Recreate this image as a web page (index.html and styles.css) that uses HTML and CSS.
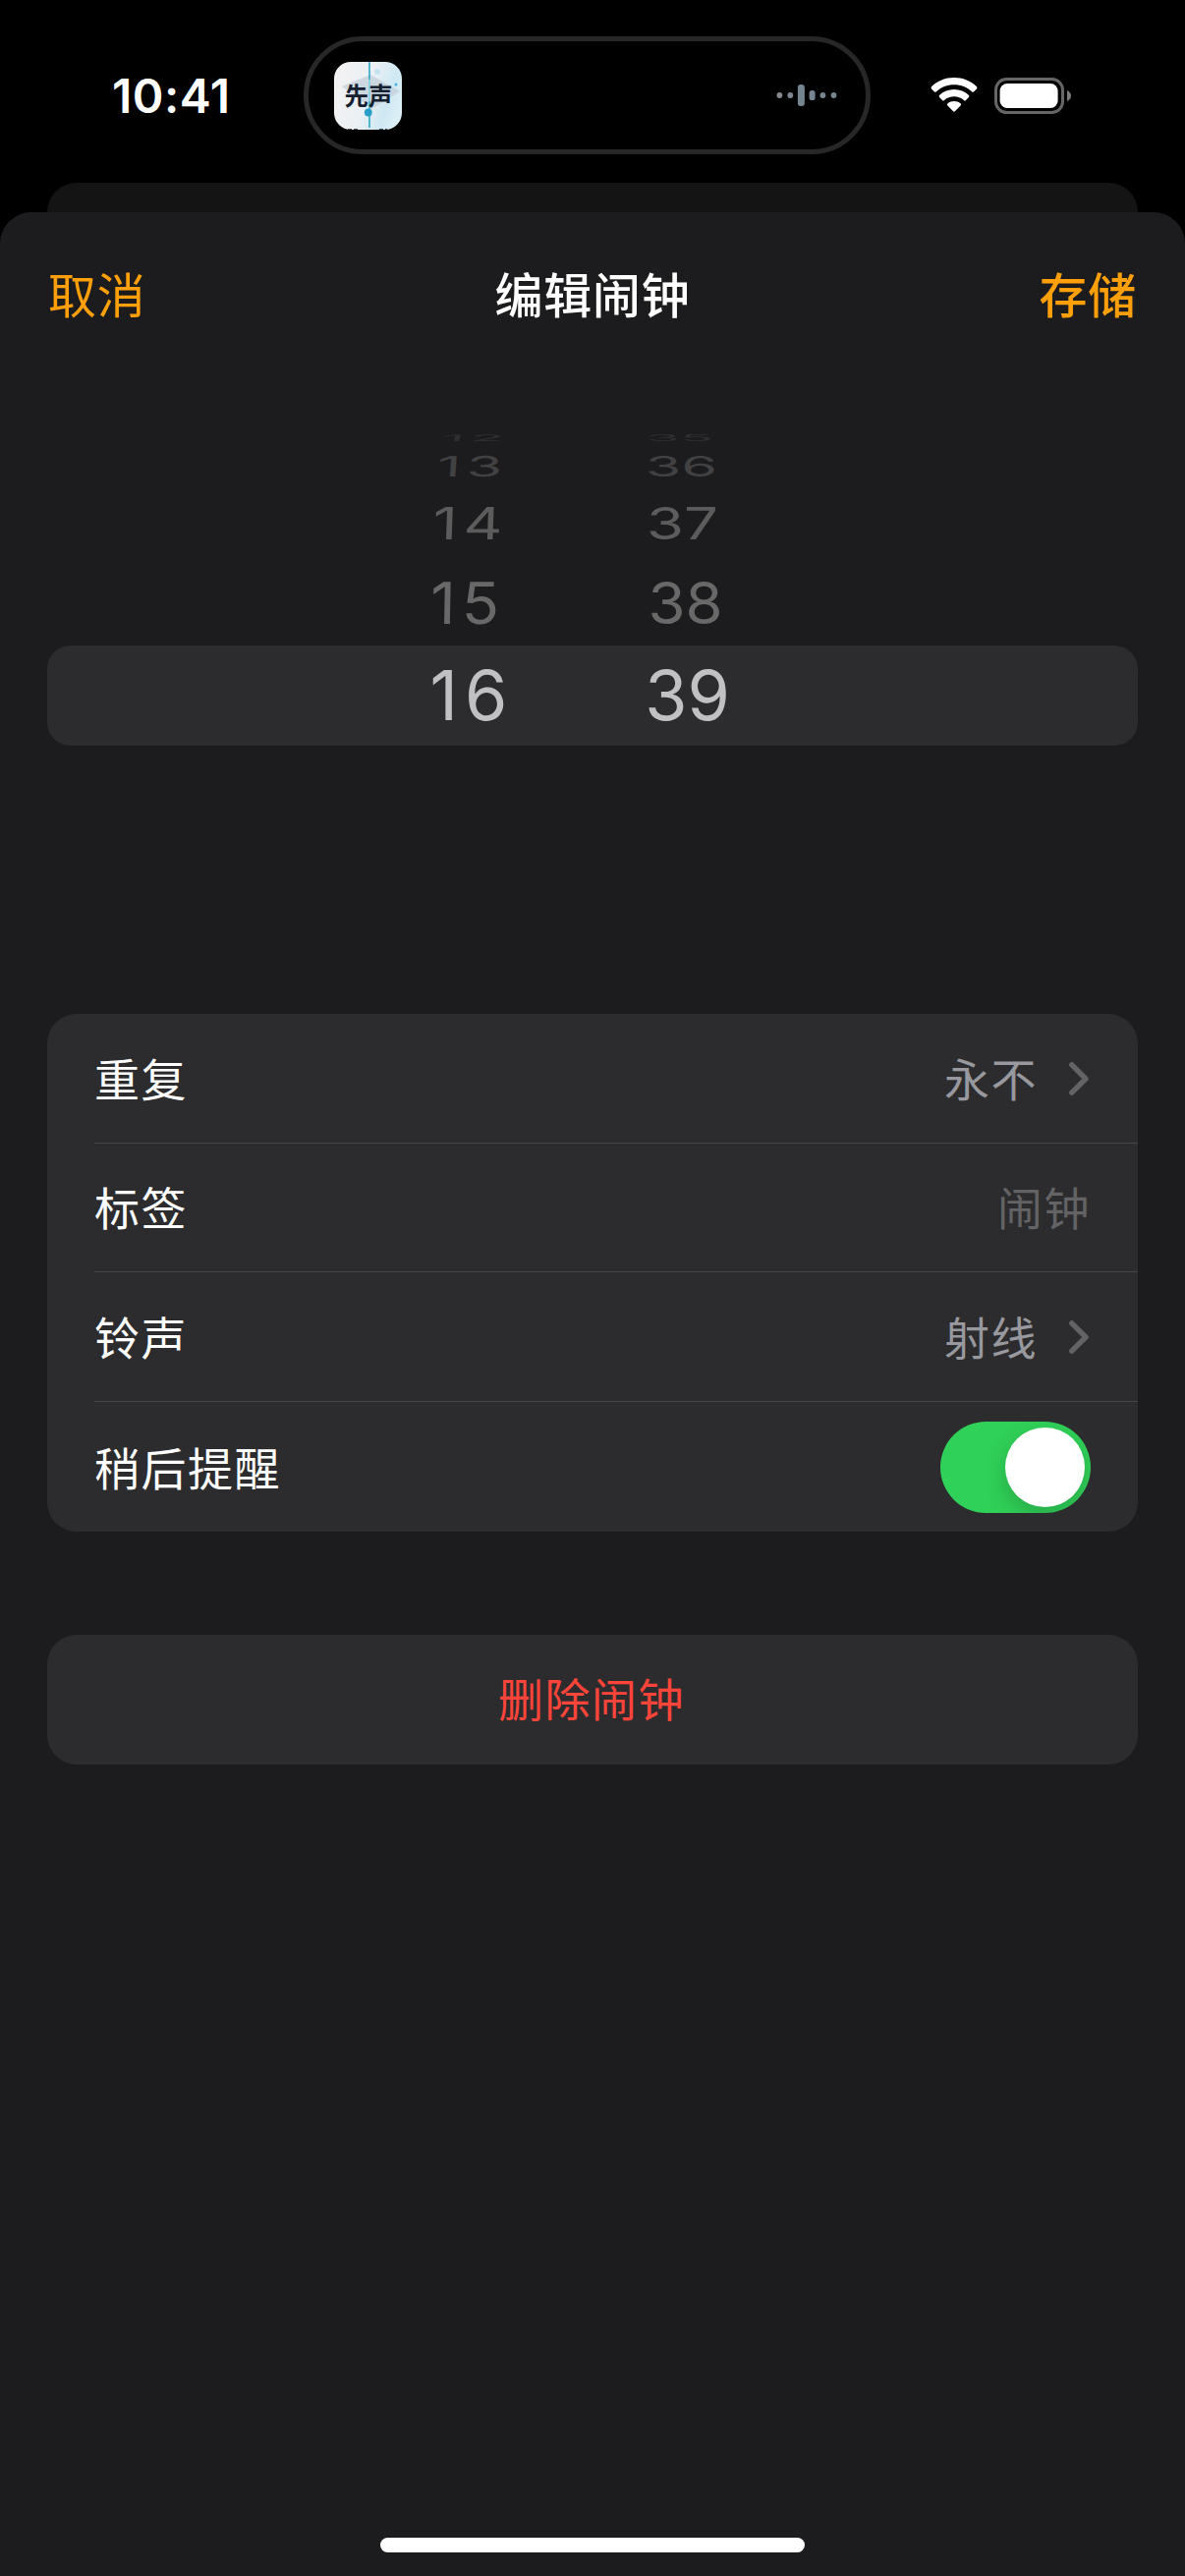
FILE: index.html
```html
<!DOCTYPE html>
<html lang="zh-CN">
<head>
<meta charset="utf-8">
<title>编辑闹钟</title>
<link rel="stylesheet" href="styles.css">
</head>
<body>
<div class="phone">
  <header class="status">
    <div class="time">10:41</div>
    <div class="island">
      <svg class="app-icon" width="69" height="69" viewBox="0 0 69 69">
        <defs>
          <linearGradient id="paper" x1="0" y1="0.3" x2="1" y2="0.6">
            <stop offset="0" stop-color="#f3f2f3"/>
            <stop offset="0.5" stop-color="#eaf0f4"/>
            <stop offset="0.8" stop-color="#cfe8f3"/>
            <stop offset="1" stop-color="#dceff7"/>
          </linearGradient>
        </defs>
        <rect width="69" height="69" rx="17" fill="url(#paper)"/>
        <path d="M8 25L37 13L67 30L38 48Z" fill="#c3cfd9" opacity="0.75"/>
        <circle cx="44" cy="10" r="3" fill="#c5e3ef"/>
        <circle cx="63" cy="23" r="1.5" fill="#3fb4dc"/>
        <path d="M36 0V67" stroke="#43b0cd" stroke-width="1.8"/>
        <text class="app-name" x="10.500" y="43.500">先声</text>
        <path d="M36 18V40" stroke="#b9e6f2" stroke-width="1.200"/>
        <circle cx="34.800" cy="51.500" r="3.900" fill="#279fc9"/>
        <path d="M14 68.500H25M46 68.500H54" stroke="#3c4650" stroke-width="1" stroke-dasharray="4 2"/>
      </svg>
      <svg class="wave" width="62" height="24" viewBox="0 0 62 24" fill="#748590">
        <circle cx="3.400" cy="12" r="2.900" fill="#85898f"/>
        <circle cx="14.300" cy="12" r="2.900" fill="#7f8890"/>
        <rect x="21.900" y="1" width="7" height="22" rx="3"/>
        <rect x="33.600" y="7" width="6" height="10" rx="2.600"/>
        <circle cx="47.400" cy="12" r="2.900"/>
        <circle cx="58.500" cy="12" r="2.900"/>
      </svg>
    </div>
    <div class="indicators">
      <svg width="48" height="36" viewBox="0 0 48 36" fill="#fff">
        <path d="M24 0C33 0 41 3.300 47 9.200Q48 10.300 47 11.400L44.200 14.200Q43.200 15.200 42.100 14.200C37.200 9.600 31 7.200 24 7.200S10.800 9.600 5.900 14.200Q4.800 15.200 3.800 14.200L1 11.400Q0 10.300 1 9.200C7 3.300 15 0 24 0Z"/>
        <path d="M24 12C29.700 12 34.900 14.100 38.800 17.800Q40 18.900 38.900 20L36 22.900Q35 23.900 33.900 22.900C31.200 20.500 27.800 19.200 24 19.200S16.800 20.500 14.100 22.900Q13 23.900 12 22.900L9.100 20Q8 18.900 9.200 17.800C13.100 14.100 18.300 12 24 12Z"/>
        <path d="M24 24C26.500 24 28.700 24.900 30.500 26.300Q31.700 27.300 30.600 28.400L24.900 34.200Q24 35.100 23.100 34.200L17.400 28.400Q16.300 27.300 17.500 26.300C19.300 24.900 21.500 24 24 24Z"/>
      </svg>
      <svg width="79" height="37" viewBox="0 0 79 37">
        <rect x="1.500" y="1.500" width="68" height="34" rx="11" fill="none" stroke="#666" stroke-width="3"/>
        <rect x="5.600" y="6" width="59" height="25" rx="7.500" fill="#fff"/>
        <path d="M74 13Q78 15 78 18.500T74 24Z" fill="#7a7a7a"/>
      </svg>
    </div>
  </header>
  <div class="under-sheet"></div>
  <main class="sheet">
    <nav class="nav">
      <span class="cancel">取消</span>
      <h1 class="title">编辑闹钟</h1>
      <span class="save">存储</span>
    </nav>
    <section class="picker">
      <div class="slot slot-4"><span class="hour">12</span><span class="minute">35</span></div>
      <div class="slot slot-3"><span class="hour">13</span><span class="minute">36</span></div>
      <div class="slot slot-2"><span class="hour">14</span><span class="minute">37</span></div>
      <div class="slot slot-1"><span class="hour">15</span><span class="minute">38</span></div>
      <div class="slot selected"><span class="hour">16</span><span class="minute">39</span></div>
    </section>
    <section class="card options">
      <div class="row"><span class="label">重复</span><span class="value">永不</span>
        <svg class="chevron" width="20" height="34" viewBox="0 0 20 34"><path d="M2.800 2.800L17 17L2.800 31.200"/></svg></div>
      <div class="row row-label"><span class="label">标签</span><span class="value placeholder">闹钟</span></div>
      <div class="row"><span class="label">铃声</span><span class="value">射线</span>
        <svg class="chevron" width="20" height="34" viewBox="0 0 20 34"><path d="M2.800 2.800L17 17L2.800 31.200"/></svg></div>
      <div class="row"><span class="label">稍后提醒</span><span class="switch"><span class="knob"></span></span></div>
    </section>
    <section class="card delete">删除闹钟</section>
    <div class="home"></div>
  </main>
</div>
</body>
</html>
```
FILE: styles.css
```css
* { box-sizing: border-box; }
body {
  margin: 0;
  background: #000;
  font-family: "Noto Sans CJK SC", sans-serif;
  color: #fff;
}
.phone {
  width: 1206px;
  height: 2622px;
  overflow: hidden;
  display: flex;
  flex-direction: column;
}
.status {
  height: 186px;
  flex: none;
  display: flex;
  align-items: flex-start;
  padding: 37px 0 0;
}
.time {
  width: 309px;
  padding-left: 114px;
  margin-top: 1px;
  font: 600 48px/120px Inter, sans-serif;
  letter-spacing: 0.5px;
}
.island {
  width: 577px;
  height: 120px;
  border: 5px solid #272727;
  border-radius: 60px;
  display: flex;
  justify-content: space-between;
  align-items: center;
  padding: 0 29px 0 26px;
}
.app-name {
  font: 700 24.5px "Noto Sans CJK SC", sans-serif;
  fill: #14202f;
}
.indicators {
  display: flex;
  gap: 17px;
  margin: 42px 0 0 61px;
}
.under-sheet {
  flex: none;
  height: 60px;
  margin: 0 48px -30px;
  background: #141414;
  border-radius: 30px 30px 0 0;
}
.sheet {
  flex: 1;
  background: #1c1c1e;
  border-radius: 32px 32px 0 0;
  display: flex;
  flex-direction: column;
  padding: 0 48px 24px;
}
.nav {
  height: 222px;
  padding-top: 46px;
  display: grid;
  grid-template-columns: 1fr auto 1fr;
  font-size: 49px;
  line-height: 72px;
  letter-spacing: 0.8px;
}
.cancel { color: #ff9f0a; font-weight: 400; padding-left: 1px; }
.title { margin: 0; font-size: inherit; font-weight: 500; }
.save { color: #ff9f0a; font-weight: 500; text-align: right; padding-right: 1px; }
.picker {
  height: 594px;
  font: 400 70px/1 Inter, sans-serif;
}
.slot {
  display: flex;
  justify-content: center;
  align-items: center;
  padding-right: 28px;
}
.slot span {
  width: 221px;
  line-height: 0;
  text-align: center;
}
.slot .hour { letter-spacing: 7px; padding-left: 4px; }
.selected {
  height: 102px;
  border-radius: 24px;
  background: #2c2c2e;
  color: #c1c1c4;
}
.slot-1 { height: 87px; color: #686869; }
.slot-2 { height: 75px; color: #5c5c5d; }
.slot-3 { height: 41px; color: #414143; }
.slot-4 { height: 16px; color: #2e2e30; }
.slot-1 .hour { transform: translateX(-4px) skewX(-1deg) scale(0.9, 0.84); }
.slot-2 .hour { transform: translateX(-1px) skewX(-2deg) scale(0.88, 0.65); }
.slot-3 .hour { transform: translateX(1px) skewX(-4deg) scale(0.84, 0.41); }
.slot-4 .hour { transform: translateX(4px) skewX(-12deg) scale(0.8, 0.13); }
.slot-1 .minute { transform: translateX(-2px) scale(0.88, 0.84); }
.slot-2 .minute { transform: translateX(-5px) scale(0.88, 0.65); }
.slot-3 .minute { transform: translateX(-6px) scale(0.84, 0.41); }
.slot-4 .minute { transform: translateX(-8px) scale(0.8, 0.13); }
.card {
  background: #2c2c2e;
  border-radius: 30px;
  font-size: 46px;
  letter-spacing: 1.5px;
}
.options { height: 527px; padding-left: 48px; }
.row {
  height: 132px;
  display: flex;
  align-items: center;
  padding-right: 48px;
  border-bottom: 1px solid #454547;
}
.row-label { height: 131px; }
.row:last-child { border-bottom: 0; }
.label, .value { line-height: 68px; padding-bottom: 3px; }
.row-label .label, .row-label .value { padding-bottom: 5px; }
.label { flex: 1; }
.value { color: #98989f; margin-right: 32px; }
.placeholder { color: #636366; margin-right: 0; }
.chevron {
  margin-right: 2px;
  fill: none;
  stroke: #636366;
  stroke-width: 5.4;
  stroke-linecap: round;
  stroke-linejoin: round;
}
.switch {
  width: 153px;
  height: 93px;
  padding: 6px;
  display: flex;
  justify-content: flex-end;
  border-radius: 47px;
  background: #30d158;
  overflow: hidden;
}
.knob {
  width: 81px;
  height: 81px;
  border-radius: 50%;
  background: #fff;
  box-shadow: 0 9px 24px rgba(0, 0, 0, 0.2);
}
.delete {
  height: 132px;
  margin-top: 105px;
  padding-right: 2px;
  line-height: 126px;
  text-align: center;
  color: #ff453a;
}
.home {
  width: 432px;
  height: 15px;
  margin: auto auto 0;
  border-radius: 8px;
  background: #fff;
}
```
